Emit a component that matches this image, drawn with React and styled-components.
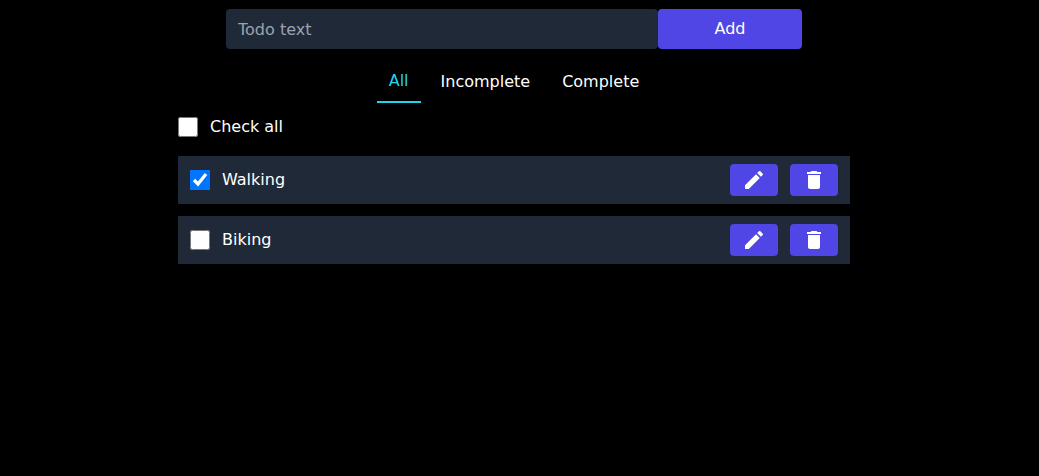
import React, { useState } from "react";
import styled, { createGlobalStyle } from "styled-components";
import { MdEdit, MdDelete } from "react-icons/md";

const GlobalStyle = createGlobalStyle`
  *, *::before, *::after { box-sizing: border-box; }
  body {
    margin: 0;
    background: #000;
    color: #fff;
    font: 16px/24px "DejaVu Sans", sans-serif;
  }
  button, input { font: inherit; color: inherit; }
`;

const Page = styled.main`
  padding: 9px 11px 12px 0;
`;

const Form = styled.form`
  display: flex;
  max-width: 576px;
  margin: 0 auto;
`;

const TextField = styled.input`
  width: 75%;
  height: 40px;
  padding: 8px 12px;
  border: 0;
  border-radius: 4px;
  outline: none;
  background: #1f2937;
  line-height: normal;
  &::placeholder { color: #9ca3af; opacity: 1; }
`;

const Button = styled.button`
  display: flex;
  align-items: center;
  justify-content: center;
  padding: 0;
  border: 0;
  border-radius: 4px;
  background: #4f46e5;
  cursor: pointer;
`;

const AddButton = styled(Button)`
  width: 25%;
  height: 40px;
`;

const IconButton = styled(Button)`
  width: 48px;
  height: 32px;
`;

const Tabs = styled.nav`
  display: flex;
  align-items: center;
  justify-content: center;
  gap: 8px;
  margin: 12px 0;
`;

const Tab = styled.button`
  padding: 8px 12px;
  border: 0;
  border-bottom: ${(p) => (p.$active ? "2px solid #22d3ee" : "0")};
  background: none;
  color: ${(p) => (p.$active ? "#22d3ee" : "#fff")};
  cursor: pointer;
`;

const Todos = styled.section`
  max-width: 672px;
  margin: 0 auto;
`;

const CheckLabel = styled.label`
  display: flex;
  align-items: center;
  gap: 12px;
`;

const Checkbox = styled.input`
  width: 20px;
  height: 20px;
  margin: 0;
`;

const List = styled.ul`
  display: flex;
  flex-direction: column;
  gap: 12px;
  margin: 17px 0 0;
  padding: 0;
  list-style: none;
`;

const Item = styled.li`
  display: flex;
  align-items: center;
  justify-content: space-between;
  padding: 8px 12px;
  background: #1f2937;
`;

const Actions = styled.div`
  display: flex;
  gap: 12px;
`;

const filters = ["All", "Incomplete", "Complete"];

export default function App() {
  const [text, setText] = useState("");
  const [filter, setFilter] = useState("All");
  const [todos, setTodos] = useState([
    { id: 1, title: "Walking", done: true },
    { id: 2, title: "Biking", done: false },
  ]);

  const add = (e) => {
    e.preventDefault();
    if (!text.trim()) return;
    setTodos([...todos, { id: Date.now(), title: text.trim(), done: false }]);
    setText("");
  };
  const toggle = (id) =>
    setTodos(todos.map((t) => (t.id === id ? { ...t, done: !t.done } : t)));
  const remove = (id) => setTodos(todos.filter((t) => t.id !== id));
  const edit = (todo) => {
    const title = window.prompt("Todo text", todo.title);
    if (title) setTodos(todos.map((t) => (t.id === todo.id ? { ...t, title } : t)));
  };

  const allDone = todos.length > 0 && todos.every((t) => t.done);
  const visible = todos.filter(
    (t) => filter === "All" || t.done === (filter === "Complete")
  );

  return (
    <>
      <GlobalStyle />
      <Page>
        <Form onSubmit={add}>
          <TextField
            type="text"
            aria-label="Todo text"
            placeholder="Todo text"
            value={text}
            onChange={(e) => setText(e.target.value)}
          />
          <AddButton type="submit">Add</AddButton>
        </Form>
        <Tabs>
          {filters.map((name) => (
            <Tab
              key={name}
              type="button"
              $active={filter === name}
              aria-pressed={filter === name}
              onClick={() => setFilter(name)}
            >
              {name}
            </Tab>
          ))}
        </Tabs>
        <Todos>
          <CheckLabel>
            <Checkbox
              type="checkbox"
              checked={allDone}
              onChange={() => setTodos(todos.map((t) => ({ ...t, done: !allDone })))}
            />
            Check all
          </CheckLabel>
          <List>
            {visible.map((todo) => (
              <Item key={todo.id}>
                <CheckLabel>
                  <Checkbox
                    type="checkbox"
                    checked={todo.done}
                    onChange={() => toggle(todo.id)}
                  />
                  {todo.title}
                </CheckLabel>
                <Actions>
                  <IconButton type="button" aria-label={`Edit ${todo.title}`} onClick={() => edit(todo)}>
                    <MdEdit size={24} />
                  </IconButton>
                  <IconButton type="button" aria-label={`Delete ${todo.title}`} onClick={() => remove(todo.id)}>
                    <MdDelete size={24} />
                  </IconButton>
                </Actions>
              </Item>
            ))}
          </List>
        </Todos>
      </Page>
    </>
  );
}
